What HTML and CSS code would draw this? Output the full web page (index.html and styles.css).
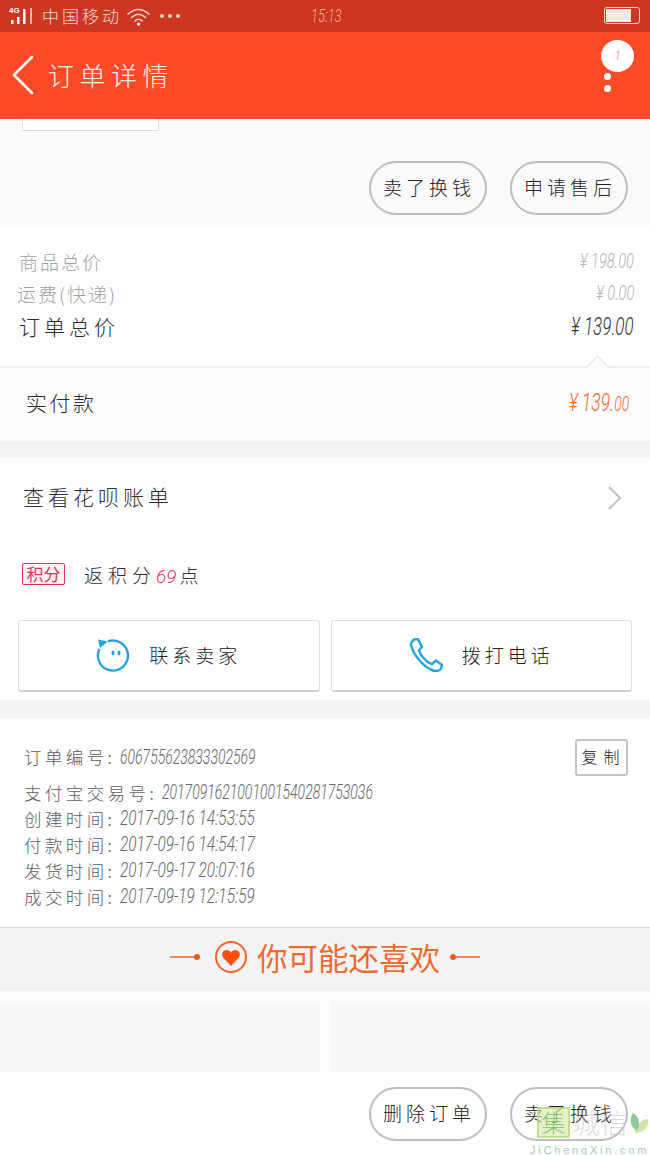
FILE: index.html
```html
<!DOCTYPE html>
<html lang="zh-CN">
<head>
    <meta charset="UTF-8">
    <meta name="viewport" content="width=device-width, initial-scale=1.0">
    <title>订单详情</title>
    <link rel="stylesheet" href="styles.css">
</head>
<body>

<div class="status-bar">
    <div class="status-left">
        <svg class="signal" width="24" height="20" viewBox="0 0 24 20">
            <text x="0" y="7" class="net">4G</text>
            <rect x="2" y="14" width="2.500" height="4" fill="#fff"/>
            <rect x="8" y="11" width="2.500" height="7" fill="#fff"/>
            <rect x="14" y="3" width="2.500" height="15" fill="#fff"/>
            <rect x="21" y="2" width="2" height="16" fill="#f3b5a8"/>
        </svg>
        <span class="carrier">中国移动</span>
        <svg class="wifi" width="23" height="19" viewBox="0 0 23 19" fill="none" stroke="#f6d3ca" stroke-width="1.600" stroke-linecap="round">
            <path d="M1 7Q11.500 -2 22 7"/>
            <path d="M4.500 10.500Q11.500 4 18.500 10.500"/>
            <path d="M8 14Q11.500 10.500 15 14"/>
            <circle cx="11.500" cy="17" r="1.500" fill="#fff" stroke="none"/>
        </svg>
        <span class="more-dots"><i></i><i></i><i></i></span>
    </div>
    <span class="clock">15:13</span>
    <div class="battery"><div class="battery-level"></div></div>
</div>

<div class="top-bar">
    <svg class="back" width="22" height="40" viewBox="0 0 22 40" fill="none" stroke="#fff" stroke-width="2.600" stroke-linecap="round" stroke-linejoin="round">
        <path d="M20 2L2 20L20 38"/>
    </svg>
    <span class="page-title">订单详情</span>
    <div class="menu-dots"><i></i><i></i></div>
    <div class="notice">1</div>
</div>

<div class="goods-end">
    <div class="goods-box"></div>
    <div class="actions">
        <button class="pill">卖了换钱</button>
        <button class="pill">申请售后</button>
    </div>
</div>

<div class="prices">
    <div class="price-row muted"><span>商品总价</span><span class="money">¥ 198.00</span></div>
    <div class="price-row muted shift"><span>运费(快递)</span><span class="money">¥ 0.00</span></div>
    <div class="price-row total"><span>订单总价</span><span class="money">¥ 139.00</span></div>
</div>

<div class="paid">
    <span class="paid-label">实付款</span>
    <span class="paid-value">¥ 139.<small>00</small></span>
</div>

<div class="extra">
    <div class="bill-row">
        <span>查看花呗账单</span>
        <svg width="15" height="24" viewBox="0 0 15 24" fill="none" stroke="#c4c4c4" stroke-width="2.200">
            <path d="M2 1L13 12L2 23"/>
        </svg>
    </div>
    <div class="points-row">
        <span class="points-tag">积分</span>
        <span class="points-text">返积分<em>69</em>点</span>
    </div>
    <div class="contact">
        <button class="contact-btn">
            <svg width="34" height="34" viewBox="0 0 34 34" fill="none" stroke="#25a3de" stroke-width="2.400">
                <path d="M12 3.400A15 15 0 1 1 3.500 10.900"/>
                <path d="M2 1.500L12 3.400L4 10Z" fill="#25a3de" stroke="none"/>
                <ellipse cx="17" cy="15" rx="1.500" ry="2.400" fill="#25a3de" stroke="none"/>
                <ellipse cx="23" cy="15" rx="1.500" ry="2.400" fill="#25a3de" stroke="none"/>
            </svg>
            <span>联系卖家</span>
        </button>
        <button class="contact-btn">
            <svg width="34" height="34" viewBox="0 0 34 34" fill="none" stroke="#25a3de" stroke-width="2.400" stroke-linejoin="round">
                <path d="M5 1.500L9 1L13 9L10 12C11 17 18 25 23 26L27 22.500L33 27L32 31C30 33 27 33.500 24 32.500C14 29 4 16 2 7C2 5 3 3 5 1.500Z"/>
            </svg>
            <span>拨打电话</span>
        </button>
    </div>
</div>

<div class="order-info">
    <button class="copy">复制</button>
    <div class="info-row first"><span class="info-key">订单编号:</span><span class="info-val">606755623833302569</span></div>
    <div class="info-row"><span class="info-key">支付宝交易号:</span><span class="info-val">2017091621001001540281753036</span></div>
    <div class="info-row"><span class="info-key">创建时间:</span><span class="info-val date">2017-09-16 14:53:55</span></div>
    <div class="info-row"><span class="info-key">付款时间:</span><span class="info-val date">2017-09-16 14:54:17</span></div>
    <div class="info-row"><span class="info-key">发货时间:</span><span class="info-val date">2017-09-17 20:07:16</span></div>
    <div class="info-row"><span class="info-key">成交时间:</span><span class="info-val date">2017-09-19 12:15:59</span></div>
</div>

<div class="recommend">
    <span class="rec-line"><i></i></span>
    <svg width="34" height="34" viewBox="0 0 34 34">
        <circle cx="17" cy="17" r="15" fill="none" stroke="#f2642c" stroke-width="2"/>
        <path d="M17 26L9.500 18C6.500 14.500 9 10 12.500 10C14.500 10 16 11 17 12.500C18 11 19.500 10 21.500 10C25 10 27.500 14.500 24.500 18Z" fill="#f9500f"/>
    </svg>
    <span class="rec-title">你可能还喜欢</span>
    <span class="rec-line flip"><i></i></span>
</div>

<div class="rec-cards">
    <div class="rec-card"></div>
    <div class="rec-card"></div>
</div>

<div class="bottom-bar">
    <button class="pill">删除订单</button>
    <button class="pill">卖了换钱</button>
</div>

<!-- site stamp over the corner -->
<div class="stamp">
    <div class="stamp-top">
        <span class="stamp-box">集</span>
        <span class="stamp-name">城信</span>
        <svg width="20" height="24" viewBox="0 0 20 24">
            <path d="M6 22C15 22 21 15 19 8C14 8 7 12 6 22Z" fill="#cfe6a8"/>
            <path d="M8 20C1 16 0 8 4 2C10 5 12 13 8 20Z" fill="#8fc99a"/>
        </svg>
    </div>
    <div class="stamp-url">JiChengXin.com</div>
</div>

</body>
</html>
```

FILE: styles.css
```css
* {
    box-sizing: border-box;
}

body {
    margin: 0;
    width: 650px;
    height: 1155px;
    overflow: hidden;
    position: relative;
    background: #fff;
    color: #2e2e2e;
    font-family: "Noto Sans CJK SC", "Liberation Sans", sans-serif;
    font-weight: 300;
}

button {
    font-family: inherit;
    font-weight: inherit;
    background: #fff;
    color: #222;
    padding: 0;
}

/* status bar */
.status-bar {
    height: 32px;
    background: #cd3620;
    color: #f6d9d0;
    display: flex;
    align-items: center;
    justify-content: space-between;
    padding: 0 10px 0 9px;
    position: relative;
}

.status-left {
    display: flex;
    align-items: center;
}

.net {
    font-family: "Liberation Sans", sans-serif;
    font-size: 8px;
    font-weight: 700;
    fill: #fff;
}

.carrier {
    font-size: 17px;
    letter-spacing: 3px;
    margin-left: 9px;
    line-height: 32px;
}

.wifi {
    margin-left: 5px;
}

.more-dots {
    display: flex;
    gap: 4px;
    margin-left: 10px;
}

.more-dots i {
    width: 4px;
    height: 4px;
    border-radius: 50%;
    background: #f6d9d0;
}

.clock {
    position: absolute;
    left: 311px;
    top: 6px;
    font-family: Roboto, "Liberation Sans", sans-serif;
    font-style: italic;
    font-size: 18px;
    line-height: 20px;
    color: #eeb0a2;
    transform: scaleX(0.72);
    transform-origin: left;
}

.battery {
    width: 36px;
    height: 17px;
    border: 1.500px solid #f6d9d0;
    border-radius: 3px;
    padding: 1px;
    margin-bottom: 1px;
}

.battery-level {
    width: 25px;
    height: 100%;
    background: #fbe7e2;
}

/* header */
.top-bar {
    height: 87px;
    background: #ff4a2a;
    display: flex;
    align-items: center;
    padding: 0 16px 1px 12px;
    position: relative;
}

.page-title {
    color: #fdf1ec;
    font-size: 26px;
    letter-spacing: 5.500px;
    margin-left: 14px;
    line-height: 40px;
}

.menu-dots {
    margin-left: auto;
    margin-right: 23px;
    margin-top: 14px;
    display: flex;
    flex-direction: column;
    gap: 5px;
}

.menu-dots i {
    width: 7px;
    height: 7px;
    border-radius: 50%;
    background: #fff;
}

.notice {
    position: absolute;
    left: 601px;
    top: 8px;
    width: 33px;
    height: 32px;
    border-radius: 50%;
    background: #fff;
    color: #e88;
    font-family: Roboto, "Liberation Sans", sans-serif;
    font-size: 13px;
    font-style: italic;
    line-height: 32px;
    text-align: center;
}

/* end of the goods block */
.goods-end {
    height: 109px;
    background: #fafafa;
}

.goods-box {
    width: 137px;
    height: 12px;
    margin-left: 22px;
    background: #fff;
    border: 1px solid #dcdcdc;
    border-top: none;
}

.actions {
    display: flex;
    justify-content: flex-end;
    gap: 23px;
    padding: 30px 22px 0 0;
}

.pill {
    width: 118px;
    height: 54px;
    border: 2px solid #bdbdbd;
    border-radius: 27px;
    background: transparent;
    font-size: 19px;
    letter-spacing: 4px;
    color: #222;
    padding: 0 0 3px 2px;
}

/* prices */
.prices {
    height: 140px;
    padding: 17px 16px 0 19px;
    border-bottom: 2px solid #eeeeee;
}

.price-row {
    display: flex;
    justify-content: space-between;
    align-items: center;
    height: 32px;
}

.muted {
    color: #a2a2a2;
    font-size: 19px;
    letter-spacing: 2px;
}

.shift {
    margin-left: -2px;
}

.total {
    color: #2a2a2a;
    font-size: 21px;
    letter-spacing: 4px;
    margin-top: 1px;
}

/* the amounts are tall and narrow, so the digits get squeezed */
.money,
.paid-value,
.info-val {
    font-family: Roboto, "Liberation Sans", sans-serif;
    font-style: italic;
    letter-spacing: 0;
}

.money,
.paid-value {
    transform-origin: right;
}

.muted .money {
    font-size: 21px;
    color: #b4b4b4;
    transform: scaleX(0.7);
}

.total .money {
    font-size: 25px;
    color: #333;
    transform: scaleX(0.68);
}

.paid {
    height: 73px;
    background: #fcfcfc;
    display: flex;
    justify-content: space-between;
    align-items: center;
    padding: 0 21px 5px 26px;
    position: relative;
}

/* little notch pointing at the total */
.paid::before {
    content: "";
    position: absolute;
    left: 589px;
    top: -9px;
    width: 16px;
    height: 16px;
    background: #fcfcfc;
    border-top: 1px solid #e2e2e2;
    border-left: 1px solid #e2e2e2;
    transform: rotate(45deg);
}

.paid-label {
    font-size: 21px;
    letter-spacing: 2.500px;
}

.paid-value {
    color: #ee6a2e;
    font-size: 25px;
    transform: scaleX(0.7);
}

.paid-value small {
    font-size: 20px;
}

/* huabei, points, contact */
.extra {
    border-top: 17px solid #f4f4f4;
    height: 259px;
}

.bill-row {
    height: 80px;
    padding: 0 28px 0 23px;
    display: flex;
    justify-content: space-between;
    align-items: center;
    font-size: 21px;
    letter-spacing: 4px;
}

.bill-row span {
    margin-bottom: 4px;
}

.points-row {
    display: flex;
    align-items: center;
    padding: 22px 0 0 22px;
    height: 50px;
}

.points-tag {
    width: 43px;
    height: 22px;
    border: 1px solid #e0325f;
    border-radius: 2px;
    color: #e0325f;
    font-size: 17px;
    font-weight: 400;
    line-height: 20px;
    text-align: center;
    background: #fff3f5;
}

.points-text {
    margin-left: 19px;
    font-size: 19px;
    letter-spacing: 5px;
}

.points-text em {
    color: #e0325f;
    font-family: Roboto, "Liberation Sans", sans-serif;
    letter-spacing: 0;
    margin-right: 3px;
}

.contact {
    display: flex;
    gap: 11px;
    padding: 32px 18px 0;
}

.contact-btn {
    flex: 1;
    height: 72px;
    border: 1px solid #dedede;
    border-bottom: 2px solid #d2d2d2;
    border-radius: 3px;
    display: flex;
    justify-content: center;
    align-items: center;
    gap: 19px;
    font-size: 19px;
    letter-spacing: 4px;
    padding-bottom: 2px;
}

/* order numbers and dates */
.order-info {
    border-top: 18px solid #f4f4f4;
    height: 227px;
    padding: 20px 0 0 24px;
    position: relative;
}

.copy {
    position: absolute;
    left: 575px;
    top: 21px;
    width: 53px;
    height: 37px;
    border: 2px solid #c4c4c4;
    border-radius: 3px;
    font-size: 16px;
    letter-spacing: 6px;
    padding: 0 0 3px 4px;
    white-space: nowrap;
}

.info-row {
    display: flex;
    align-items: center;
    height: 26px;
    color: #5c5c5c;
    font-size: 17.500px;
    white-space: nowrap;
}

.first {
    height: 37px;
    margin-bottom: 4px;
}

.info-key {
    letter-spacing: 3.400px;
}

.info-val {
    margin-left: 5px;
    font-size: 20px;
    font-weight: 300;
    color: #666;
    transform: scaleX(0.7);
    transform-origin: left;
}

.info-val.date {
    transform: scaleX(0.77);
}

/* recommendations */
.recommend {
    height: 64px;
    background: #f4f4f4;
    border-top: 1px solid #dedede;
    display: flex;
    justify-content: center;
    align-items: center;
    gap: 11px;
    padding-bottom: 6px;
}

.rec-title {
    color: #ee6a2e;
    font-size: 30.500px;
    font-weight: 400;
    line-height: 40px;
    margin-left: -2px;
}

.rec-line {
    width: 29px;
    height: 2px;
    background: #f2835a;
    position: relative;
    margin-right: 4px;
}

.rec-line.flip {
    margin: 0;
}

.rec-line i {
    position: absolute;
    right: -1px;
    top: -2px;
    width: 6px;
    height: 6px;
    border-radius: 50%;
    background: #f05a22;
}

.rec-line.flip i {
    right: auto;
    left: -1px;
}

.rec-cards {
    height: 81px;
    background: #fdfdfd;
    padding-top: 10px;
    display: flex;
    gap: 10px;
}

.rec-card {
    flex: 1;
    background: #f7f8f9;
}

.bottom-bar {
    height: 83px;
    display: flex;
    justify-content: flex-end;
    gap: 23px;
    padding: 15px 22px 0 0;
}

.bottom-bar .pill {
    background: #fff;
}

/* corner stamp */
.stamp {
    position: absolute;
    left: 530px;
    top: 1107px;
    width: 120px;
}

.stamp-top {
    display: flex;
    align-items: center;
    padding-left: 7px;
}

.stamp-box {
    width: 33px;
    height: 31px;
    background: rgba(214, 234, 160, 0.6);
    border: 2px solid rgba(170, 216, 130, 0.7);
    color: rgba(120, 195, 110, 0.9);
    font-size: 24px;
    line-height: 26px;
    text-align: center;
}

.stamp-name {
    margin-left: 2px;
    color: rgba(190, 190, 190, 0.5);
    font-size: 28px;
    line-height: 31px;
    width: 57px;
}

.stamp-url {
    color: #a3cdb0;
    font-family: "Liberation Sans", sans-serif;
    font-size: 11px;
    font-weight: 400;
    letter-spacing: 2.800px;
    line-height: 14px;
    margin-top: 5px;
    white-space: nowrap;
}
```
